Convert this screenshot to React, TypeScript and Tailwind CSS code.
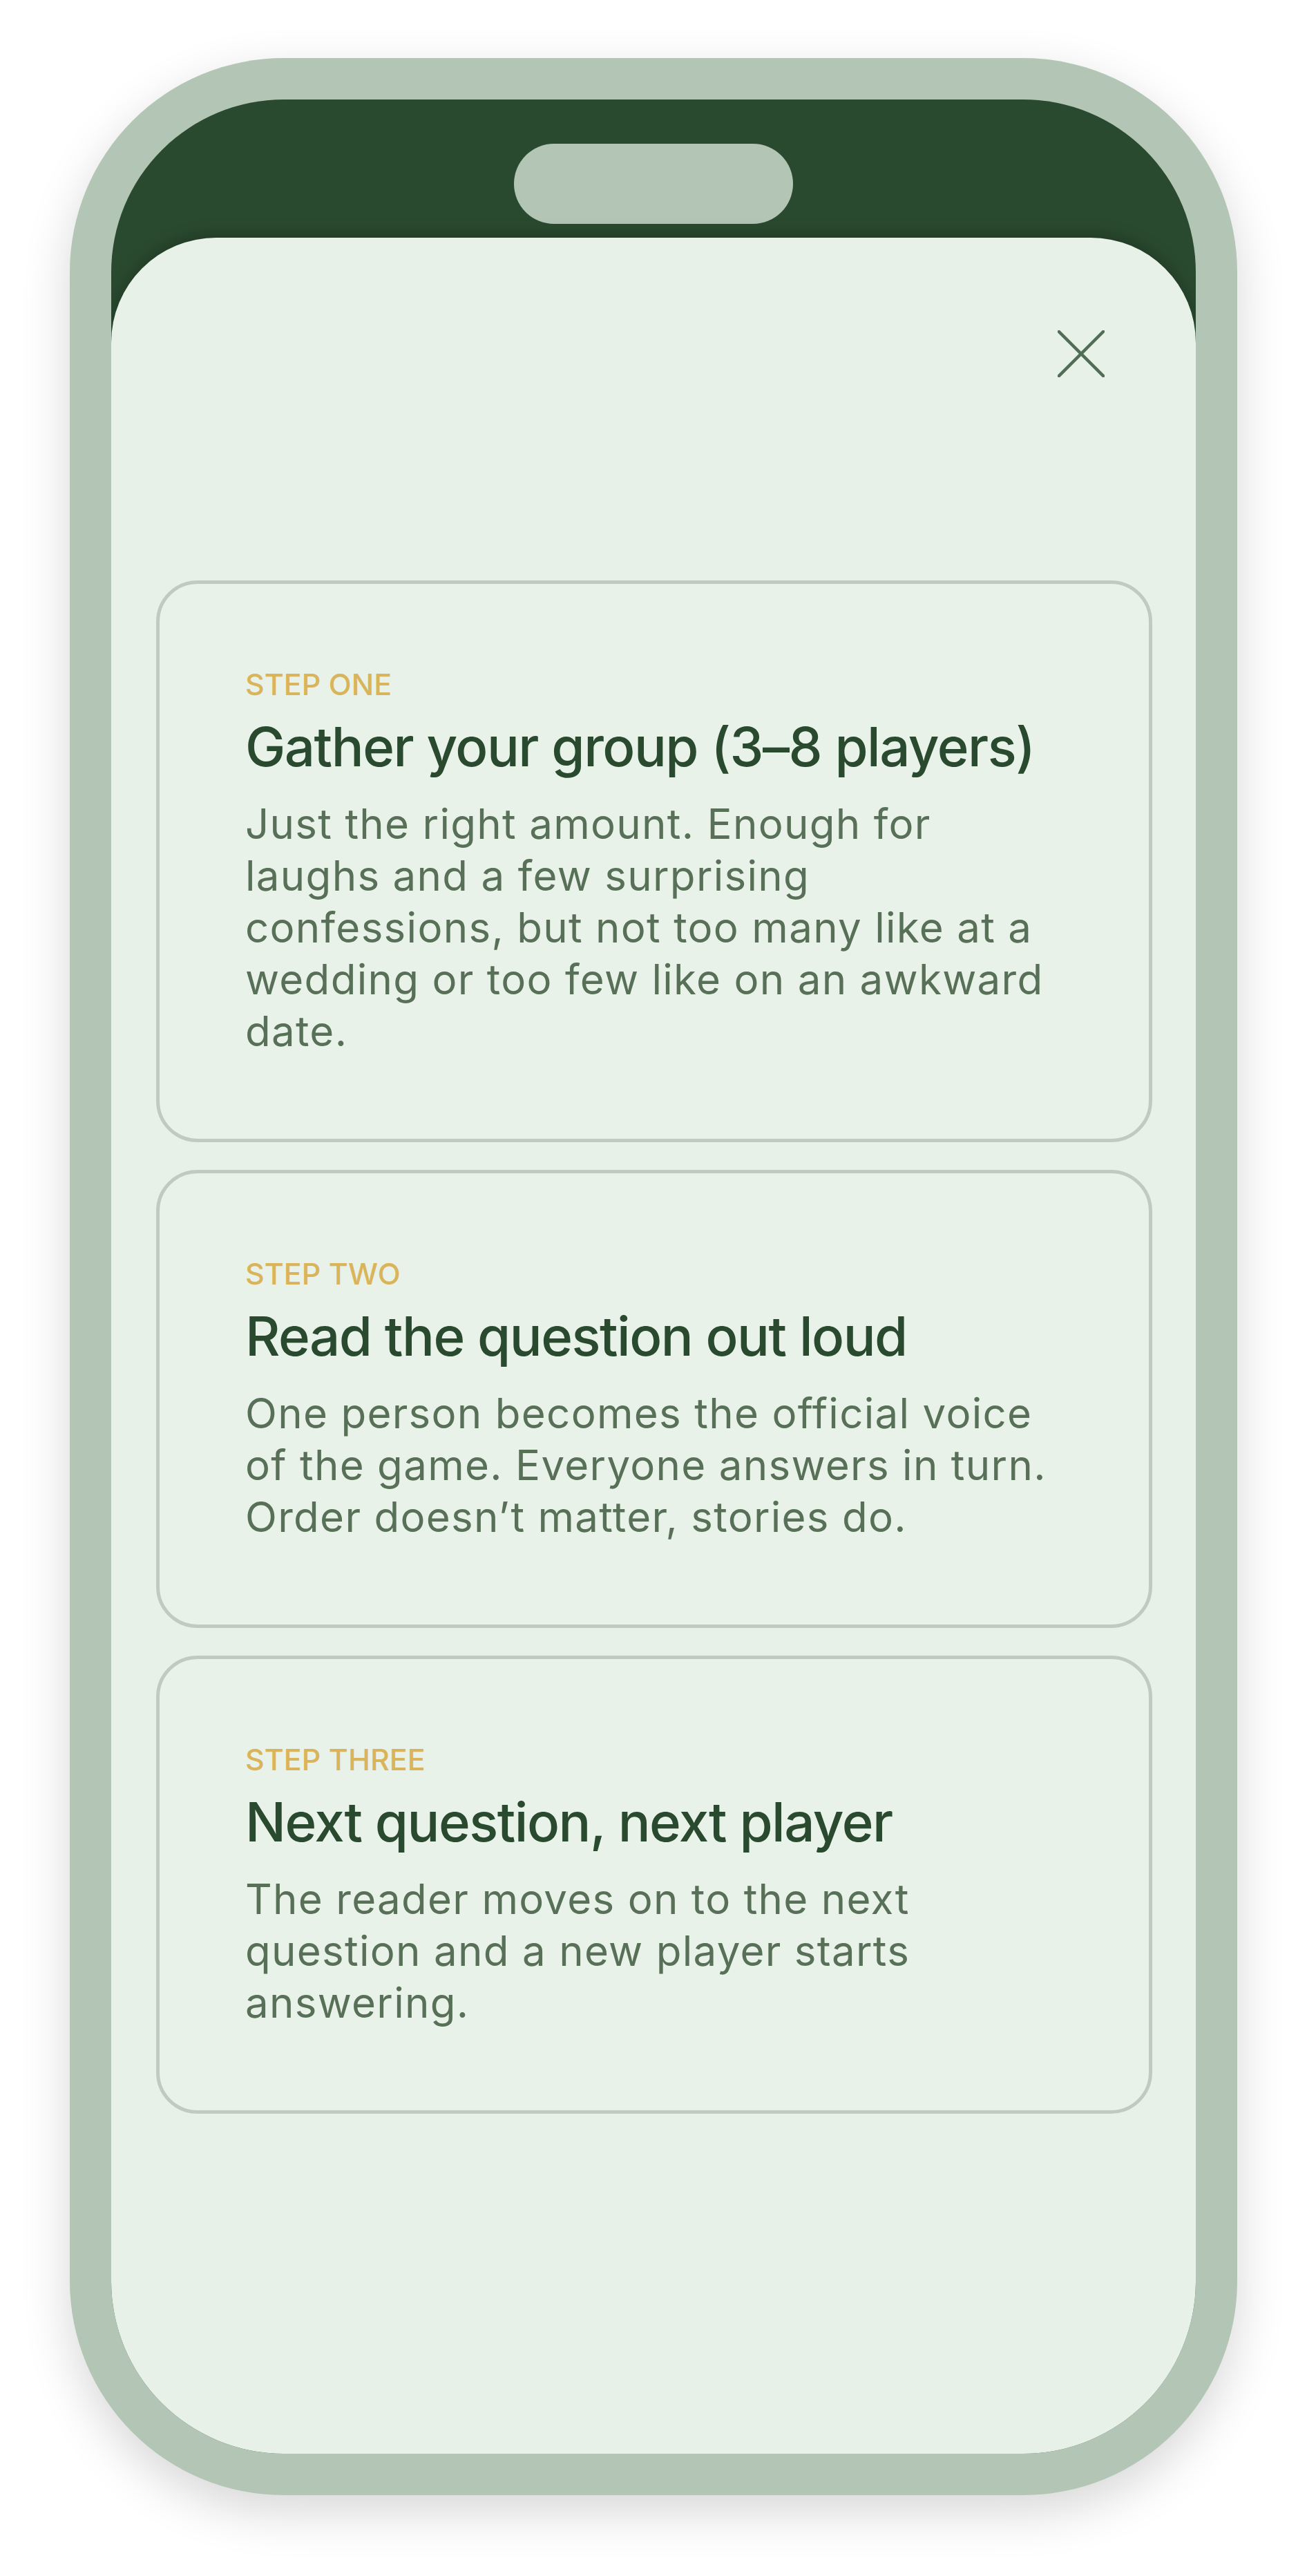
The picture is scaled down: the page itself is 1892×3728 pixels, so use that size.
import React from "react";

const steps = [
  {
    label: "STEP ONE",
    title: "Gather your group (3–8 players)",
    lines: [
      "Just the right amount. Enough for",
      "laughs and a few surprising",
      "confessions, but not too many like at a",
      "wedding or too few like on an awkward",
      "date.",
    ],
  },
  {
    label: "STEP TWO",
    title: "Read the question out loud",
    lines: [
      "One person becomes the official voice",
      "of the game. Everyone answers in turn.",
      "Order doesn’t matter, stories do.",
    ],
  },
  {
    label: "STEP THREE",
    title: "Next question, next player",
    lines: [
      "The reader moves on to the next",
      "question and a new player starts",
      "answering.",
    ],
  },
];

function StepCard({ label, title, lines }: { label: string; title: string; lines: string[] }) {
  return (
    <div className="w-[1442px] rounded-[60px] border-[5px] border-[#bfcbbf] bg-[#e8f2e8] pl-[124px] pr-[100px] pt-[119px] pb-[118px]">
      <div className="text-[43px] leading-[52px] font-medium tracking-[0px] text-[#d9b45b] whitespace-nowrap">
        {label}
      </div>
      <div className="mt-[20px] text-[78px] leading-[90px] font-medium tracking-[-1.5px] text-[#2a4a2f] whitespace-nowrap">
        {title}
      </div>
      <div className="mt-[29px] text-[60px] leading-[75px] font-normal tracking-[1.3px] text-[#587058]">
        {lines.map((l, i) => (
          <span key={i} className="block whitespace-nowrap">
            {l}
          </span>
        ))}
      </div>
    </div>
  );
}

export default function App() {
  return (
    <div className="min-h-[3728px] w-full bg-white pt-[84px] font-['Inter',sans-serif]">
      <div className="mx-auto h-[3527px] w-[1690px] rounded-[310px] bg-[#b3c6b6] p-[60px] shadow-[0_24px_70px_rgba(0,0,0,0.16)]">
        <div className="flex h-full w-full flex-col overflow-hidden rounded-[250px] bg-[#2a4a2f]">
          <div className="flex h-[200px] shrink-0 justify-center pt-[64px]">
            <div className="h-[116px] w-[404px] rounded-full bg-[#b3c6b6]" />
          </div>
          <div className="flex flex-1 flex-col rounded-t-[152px] bg-[#e7f1e7] shadow-[0_-6px_22px_rgba(0,0,0,0.22)]">
            <div className="flex justify-end pt-[134px] pr-[132px]">
              <svg width="68" height="68" viewBox="0 0 68 68" aria-label="Close">
                <line x1="2" y1="2" x2="66" y2="66" stroke="#526d57" strokeWidth="4.5" strokeLinecap="square" />
                <line x1="66" y1="2" x2="2" y2="66" stroke="#526d57" strokeWidth="4.5" strokeLinecap="square" />
              </svg>
            </div>
            <div className="ml-[65px] mt-[294px] flex flex-col gap-[40px]">
              {steps.map((s) => (
                <StepCard key={s.label} {...s} />
              ))}
            </div>
          </div>
        </div>
      </div>
    </div>
  );
}
